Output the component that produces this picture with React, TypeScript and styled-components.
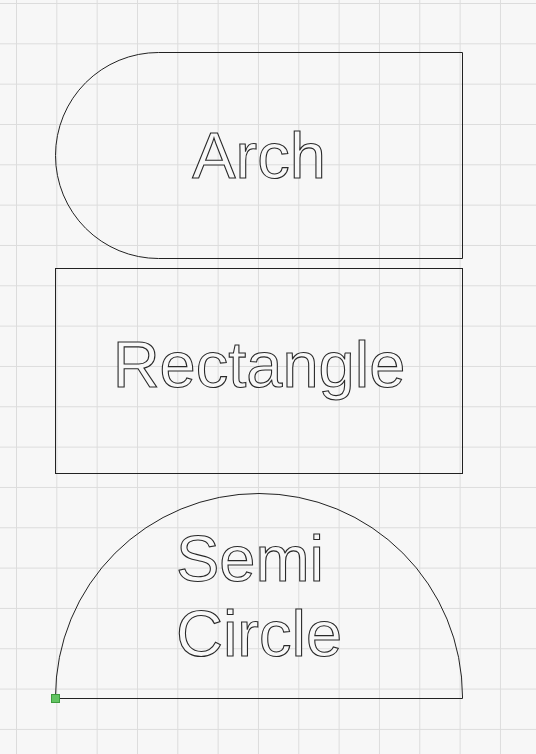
import React from "react"
import styled, { createGlobalStyle } from "styled-components"

const GlobalStyle = createGlobalStyle`
  html, body {
    margin: 0;
    padding: 0;
    background: #f7f7f7;
  }
`

const Canvas = styled.div`
  position: relative;
  box-sizing: border-box;
  width: 100%;
  min-height: 100vh;
  overflow: hidden;
  padding: 52px 0 0 55px;
  display: flex;
  flex-direction: column;
  background-color: #f7f7f7;
  background-image:
    linear-gradient(to right, #dcdcdc 1px, transparent 1px),
    linear-gradient(to bottom, #dcdcdc 1px, transparent 1px);
  background-size: 40.33px 40.33px;
  background-position: 16px 3px;
`

type Kind = "arch" | "rect" | "semi"

const Shape = styled.div<{ $kind: Kind; $gap: number }>`
  position: relative;
  box-sizing: border-box;
  width: 408px;
  height: ${p => (p.$kind === "arch" ? 207 : 206)}px;
  margin-top: ${p => p.$gap}px;
  border: 1px solid #222;
  border-radius: ${p =>
    p.$kind === "arch"
      ? "103.5px 0 0 103.5px"
      : p.$kind === "semi"
      ? "204px 204px 0 0"
      : "0"};
  display: flex;
  flex-direction: column;
  align-items: center;
  justify-content: ${p => (p.$kind === "semi" ? "flex-start" : "center")};
  padding-top: ${p => (p.$kind === "semi" ? 27 : 0)}px;
  padding-bottom: ${p => (p.$kind === "rect" ? 14 : 0)}px;
`

const Label = styled.div`
  font-family: "Liberation Sans", Arial, sans-serif;
  font-size: 65px;
  line-height: 75px;
  text-align: left;
  color: #f8f8f8;
  -webkit-text-stroke: 1.1px #2a2a2a;
  white-space: nowrap;
`

const Handle = styled.span`
  position: absolute;
  left: -5px;
  bottom: -5px;
  width: 9px;
  height: 9px;
  box-sizing: border-box;
  background: #62c462;
  border: 1px solid #3d9a3d;
`

export default function App() {
  return (
    <>
      <GlobalStyle />
      <Canvas>
        <Shape $kind="arch" $gap={0}>
          <Label>Arch</Label>
        </Shape>
        <Shape $kind="rect" $gap={9}>
          <Label>Rectangle</Label>
        </Shape>
        <Shape $kind="semi" $gap={19}>
          <Label>
            Semi
            <br />
            Circle
          </Label>
          <Handle />
        </Shape>
      </Canvas>
    </>
  )
}
